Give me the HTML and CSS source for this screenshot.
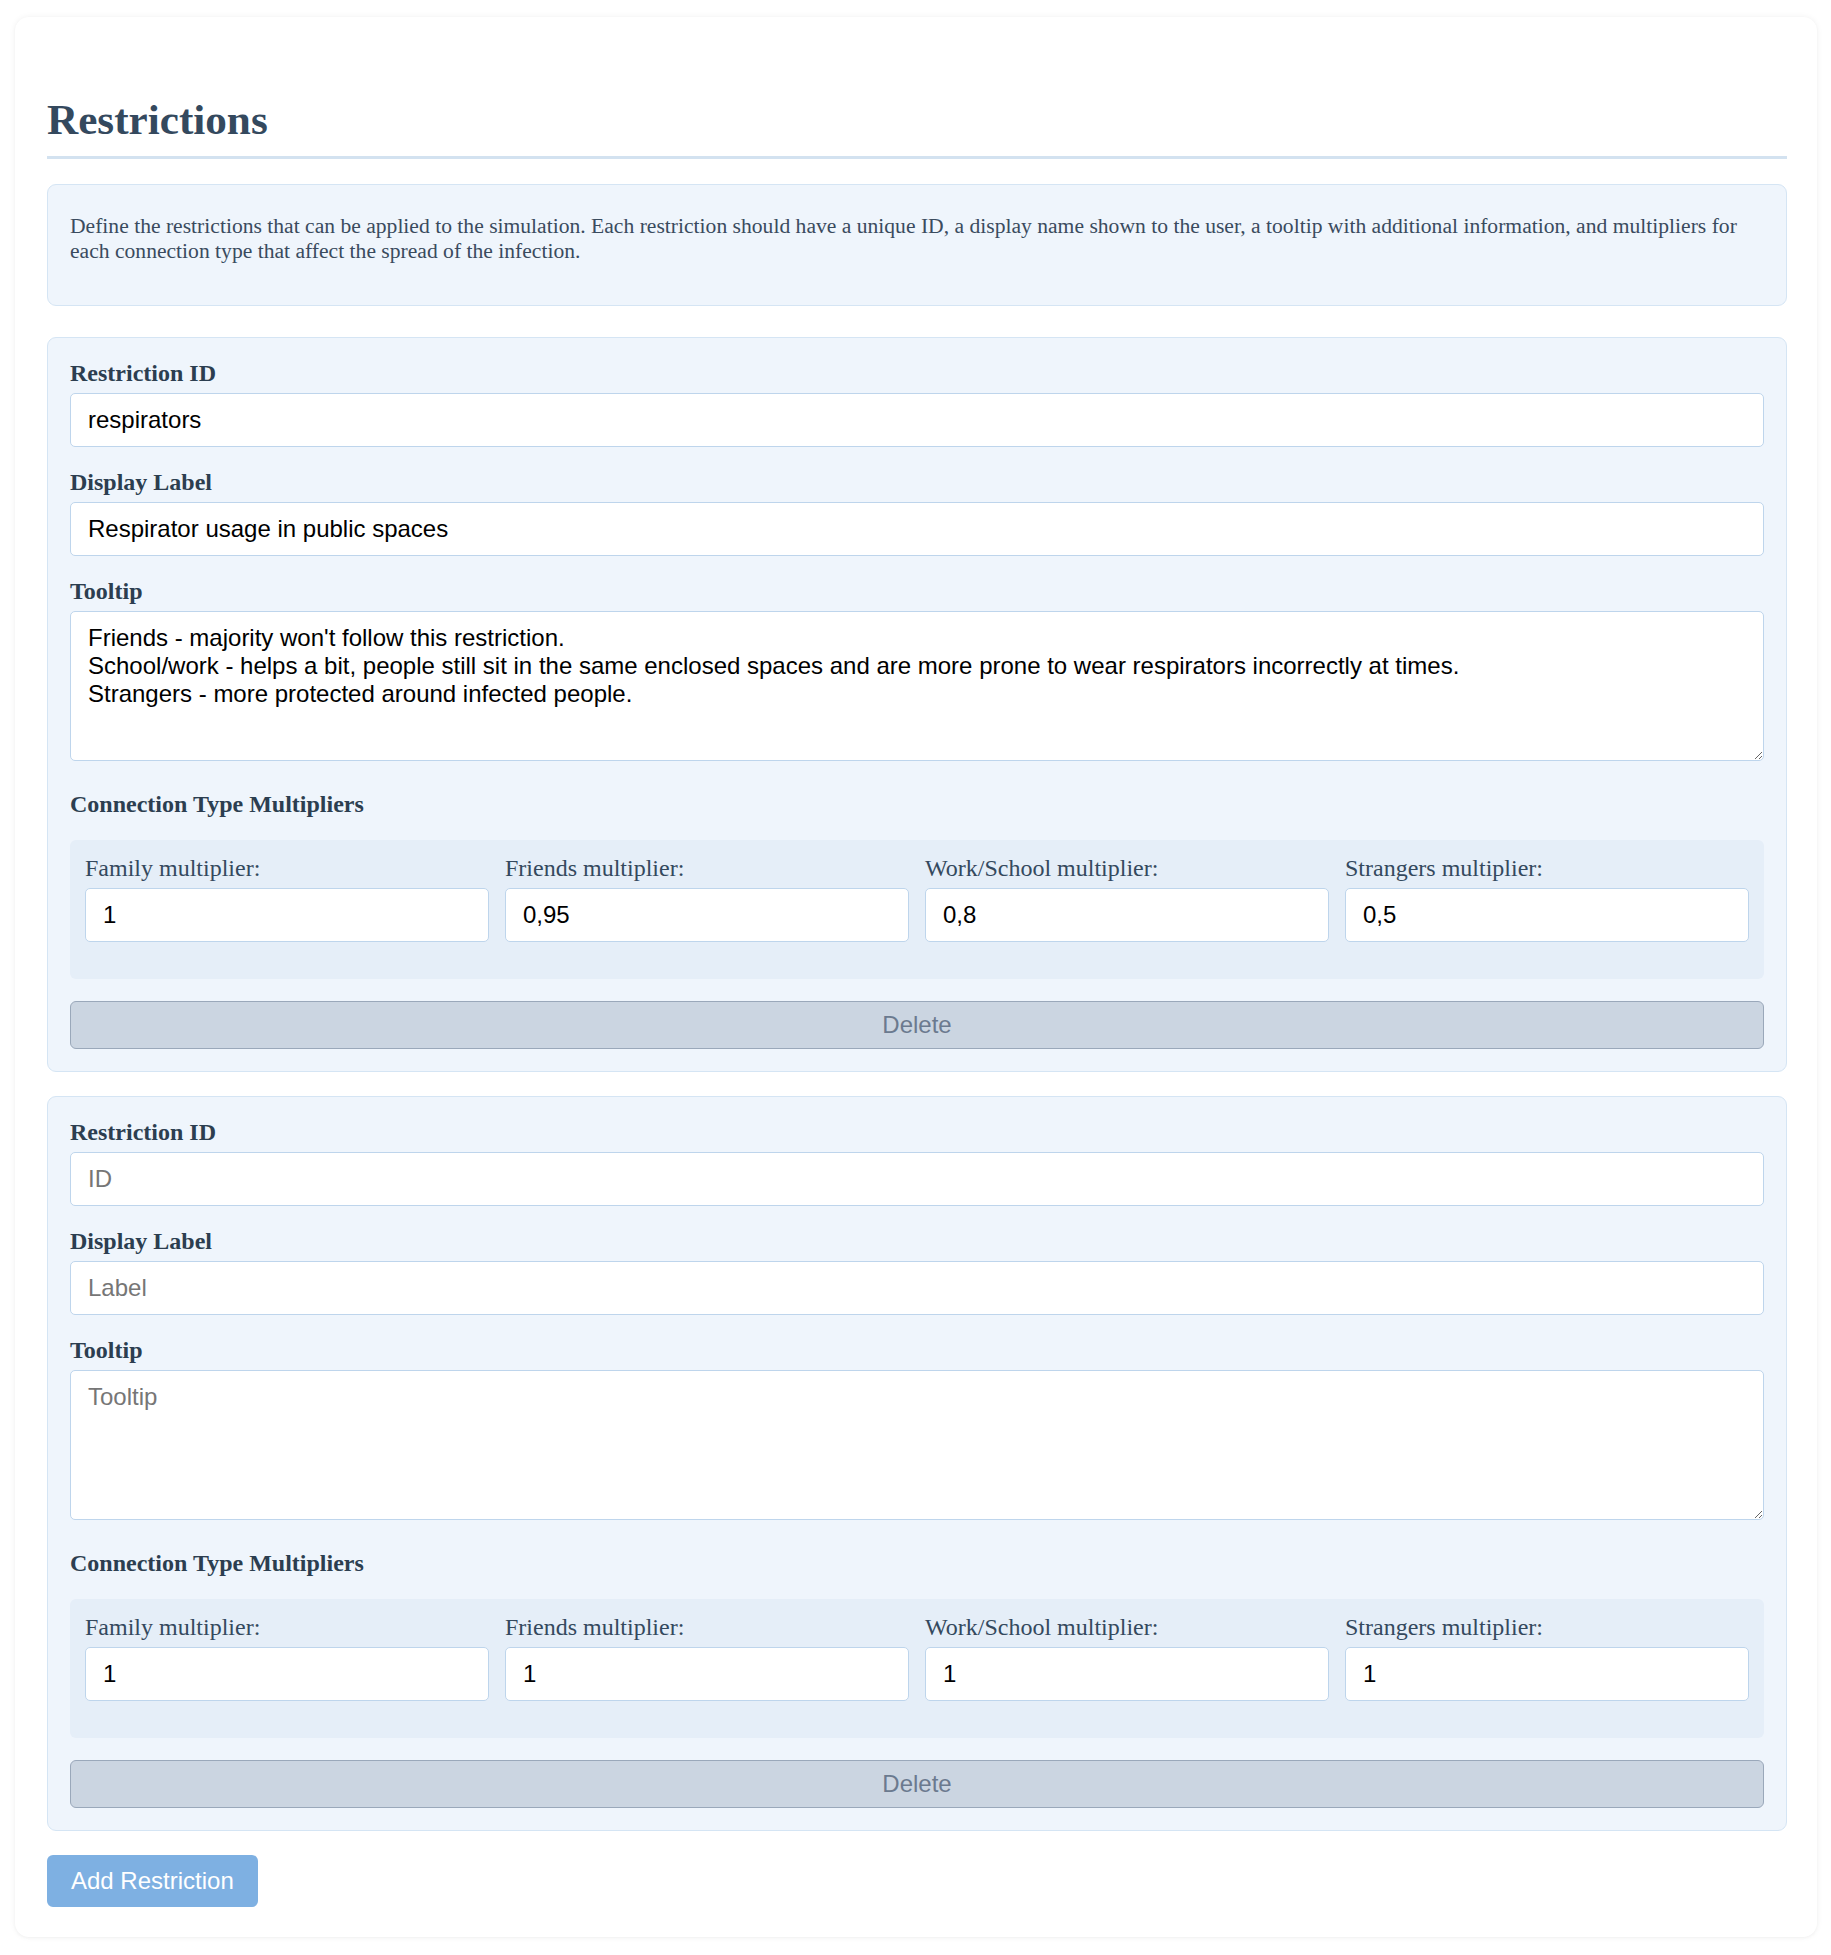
FILE: index.html
```html
<!DOCTYPE html>
<html lang="en">
<head>
<meta charset="utf-8">
<title>Restrictions</title>
<link rel="stylesheet" href="styles.css">
</head>
<body>
<div class="page">
  <h1 class="title">Restrictions</h1>
  <div class="info">
    <p>Define the restrictions that can be applied to the simulation. Each restriction should have a unique ID, a display name shown to the user, a tooltip with additional information, and multipliers for each connection type that affect the spread of the infection.</p>
  </div>

  <div class="restriction">
    <div class="field">
      <label class="field-label">Restriction ID</label>
      <input class="text-input" type="text" value="respirators" placeholder="ID">
    </div>
    <div class="field">
      <label class="field-label">Display Label</label>
      <input class="text-input" type="text" value="Respirator usage in public spaces" placeholder="Label">
    </div>
    <div class="field field-area">
      <label class="field-label">Tooltip</label>
      <textarea class="text-area" placeholder="Tooltip">Friends - majority won't follow this restriction.
School/work - helps a bit, people still sit in the same enclosed spaces and are more prone to wear respirators incorrectly at times.
Strangers - more protected around infected people.</textarea>
    </div>
    <div class="section-label">Connection Type Multipliers</div>
    <div class="multipliers">
      <div class="mult">
        <label class="mult-label">Family multiplier:</label>
        <input class="text-input" type="text" value="1">
      </div>
      <div class="mult">
        <label class="mult-label">Friends multiplier:</label>
        <input class="text-input" type="text" value="0,95">
      </div>
      <div class="mult">
        <label class="mult-label">Work/School multiplier:</label>
        <input class="text-input" type="text" value="0,8">
      </div>
      <div class="mult">
        <label class="mult-label">Strangers multiplier:</label>
        <input class="text-input" type="text" value="0,5">
      </div>
    </div>
    <button class="delete-btn" type="button">Delete</button>
  </div>

  <div class="restriction">
    <div class="field">
      <label class="field-label">Restriction ID</label>
      <input class="text-input" type="text" value="" placeholder="ID">
    </div>
    <div class="field">
      <label class="field-label">Display Label</label>
      <input class="text-input" type="text" value="" placeholder="Label">
    </div>
    <div class="field field-area">
      <label class="field-label">Tooltip</label>
      <textarea class="text-area" placeholder="Tooltip"></textarea>
    </div>
    <div class="section-label">Connection Type Multipliers</div>
    <div class="multipliers">
      <div class="mult">
        <label class="mult-label">Family multiplier:</label>
        <input class="text-input" type="text" value="1">
      </div>
      <div class="mult">
        <label class="mult-label">Friends multiplier:</label>
        <input class="text-input" type="text" value="1">
      </div>
      <div class="mult">
        <label class="mult-label">Work/School multiplier:</label>
        <input class="text-input" type="text" value="1">
      </div>
      <div class="mult">
        <label class="mult-label">Strangers multiplier:</label>
        <input class="text-input" type="text" value="1">
      </div>
    </div>
    <button class="delete-btn" type="button">Delete</button>
  </div>

  <button class="add-btn" type="button">Add Restriction</button>
</div>
</body>
</html>
```

FILE: styles.css
```css
* {
  box-sizing: border-box;
}

html, body {
  background: #ffffff;
}

body {
  margin: 0;
  padding: 17px 14px 16px 15px;
  font-family: "Liberation Serif", "Times New Roman", serif;
  font-size: 24px;
  color: #2c3e50;
}

.page {
  background: #ffffff;
  border-radius: 14px;
  box-shadow: 0 0 6px rgba(0, 0, 0, 0.06), 0 1px 3px rgba(0, 0, 0, 0.03);
  padding: 32px 30px 30px 32px;
  display: flex;
  flex-direction: column;
  align-items: stretch;
}

.title {
  margin: 46px 0 25px;
  padding-bottom: 12px;
  border-bottom: 3px solid #d3e2f0;
  font-size: 43.2px;
  font-weight: bold;
  line-height: normal;
  color: #34495e;
}

.info {
  background: #eff5fc;
  border: 1px solid #d5e5f4;
  border-radius: 9px;
  padding: 29px 22px 41px;
  margin-bottom: 31px;
}

.info p {
  margin: 0;
  font-size: 21.6px;
  line-height: normal;
  color: #3a4b5e;
}

.restriction {
  background: #eff5fc;
  border: 1px solid #d5e5f4;
  border-radius: 9px;
  padding: 22px;
  margin-bottom: 24px;
  display: flex;
  flex-direction: column;
}

.field {
  display: flex;
  flex-direction: column;
  margin-bottom: 22px;
}

.field-area {
  margin-bottom: 30px;
}

.field-label,
.section-label {
  font-weight: bold;
  font-size: 24px;
  line-height: normal;
  color: #2c3e50;
  margin-bottom: 6px;
}

.section-label {
  margin-bottom: 22px;
}

.text-input,
.text-area {
  display: block;
  width: 100%;
  font-family: "Liberation Sans", Arial, sans-serif;
  font-size: 24px;
  line-height: normal;
  color: #000000;
  background: #ffffff;
  border: 1px solid #bed5ec;
  border-radius: 5px;
  padding: 12px 16px 12px 17px;
  margin: 0;
  outline: none;
}

.text-input::placeholder,
.text-area::placeholder {
  color: #767676;
}

.text-area {
  height: 150px;
  resize: vertical;
}

.multipliers {
  background: #e5eef8;
  border-radius: 6px;
  padding: 15px;
  display: grid;
  grid-template-columns: repeat(4, 1fr);
  column-gap: 16px;
  margin-bottom: 22px;
}

.mult {
  display: flex;
  flex-direction: column;
  margin-bottom: 22px;
  min-width: 0;
}

.mult-label {
  font-size: 24px;
  line-height: normal;
  font-weight: normal;
  color: #34495e;
  margin-bottom: 6px;
}

.delete-btn {
  display: block;
  width: 100%;
  font-family: "Liberation Sans", Arial, sans-serif;
  font-size: 24px;
  line-height: normal;
  color: #6b7a8f;
  background: #cbd5e1;
  border: 1px solid #9aa8ba;
  border-radius: 6px;
  padding: 9px 16px;
  margin: 0;
}

.add-btn {
  align-self: flex-start;
  margin-top: 0;
  font-family: "Liberation Sans", Arial, sans-serif;
  font-size: 24px;
  line-height: normal;
  color: #ffffff;
  background: #7eb0e2;
  border: none;
  border-radius: 6px;
  padding: 12px 24px;
}
```
